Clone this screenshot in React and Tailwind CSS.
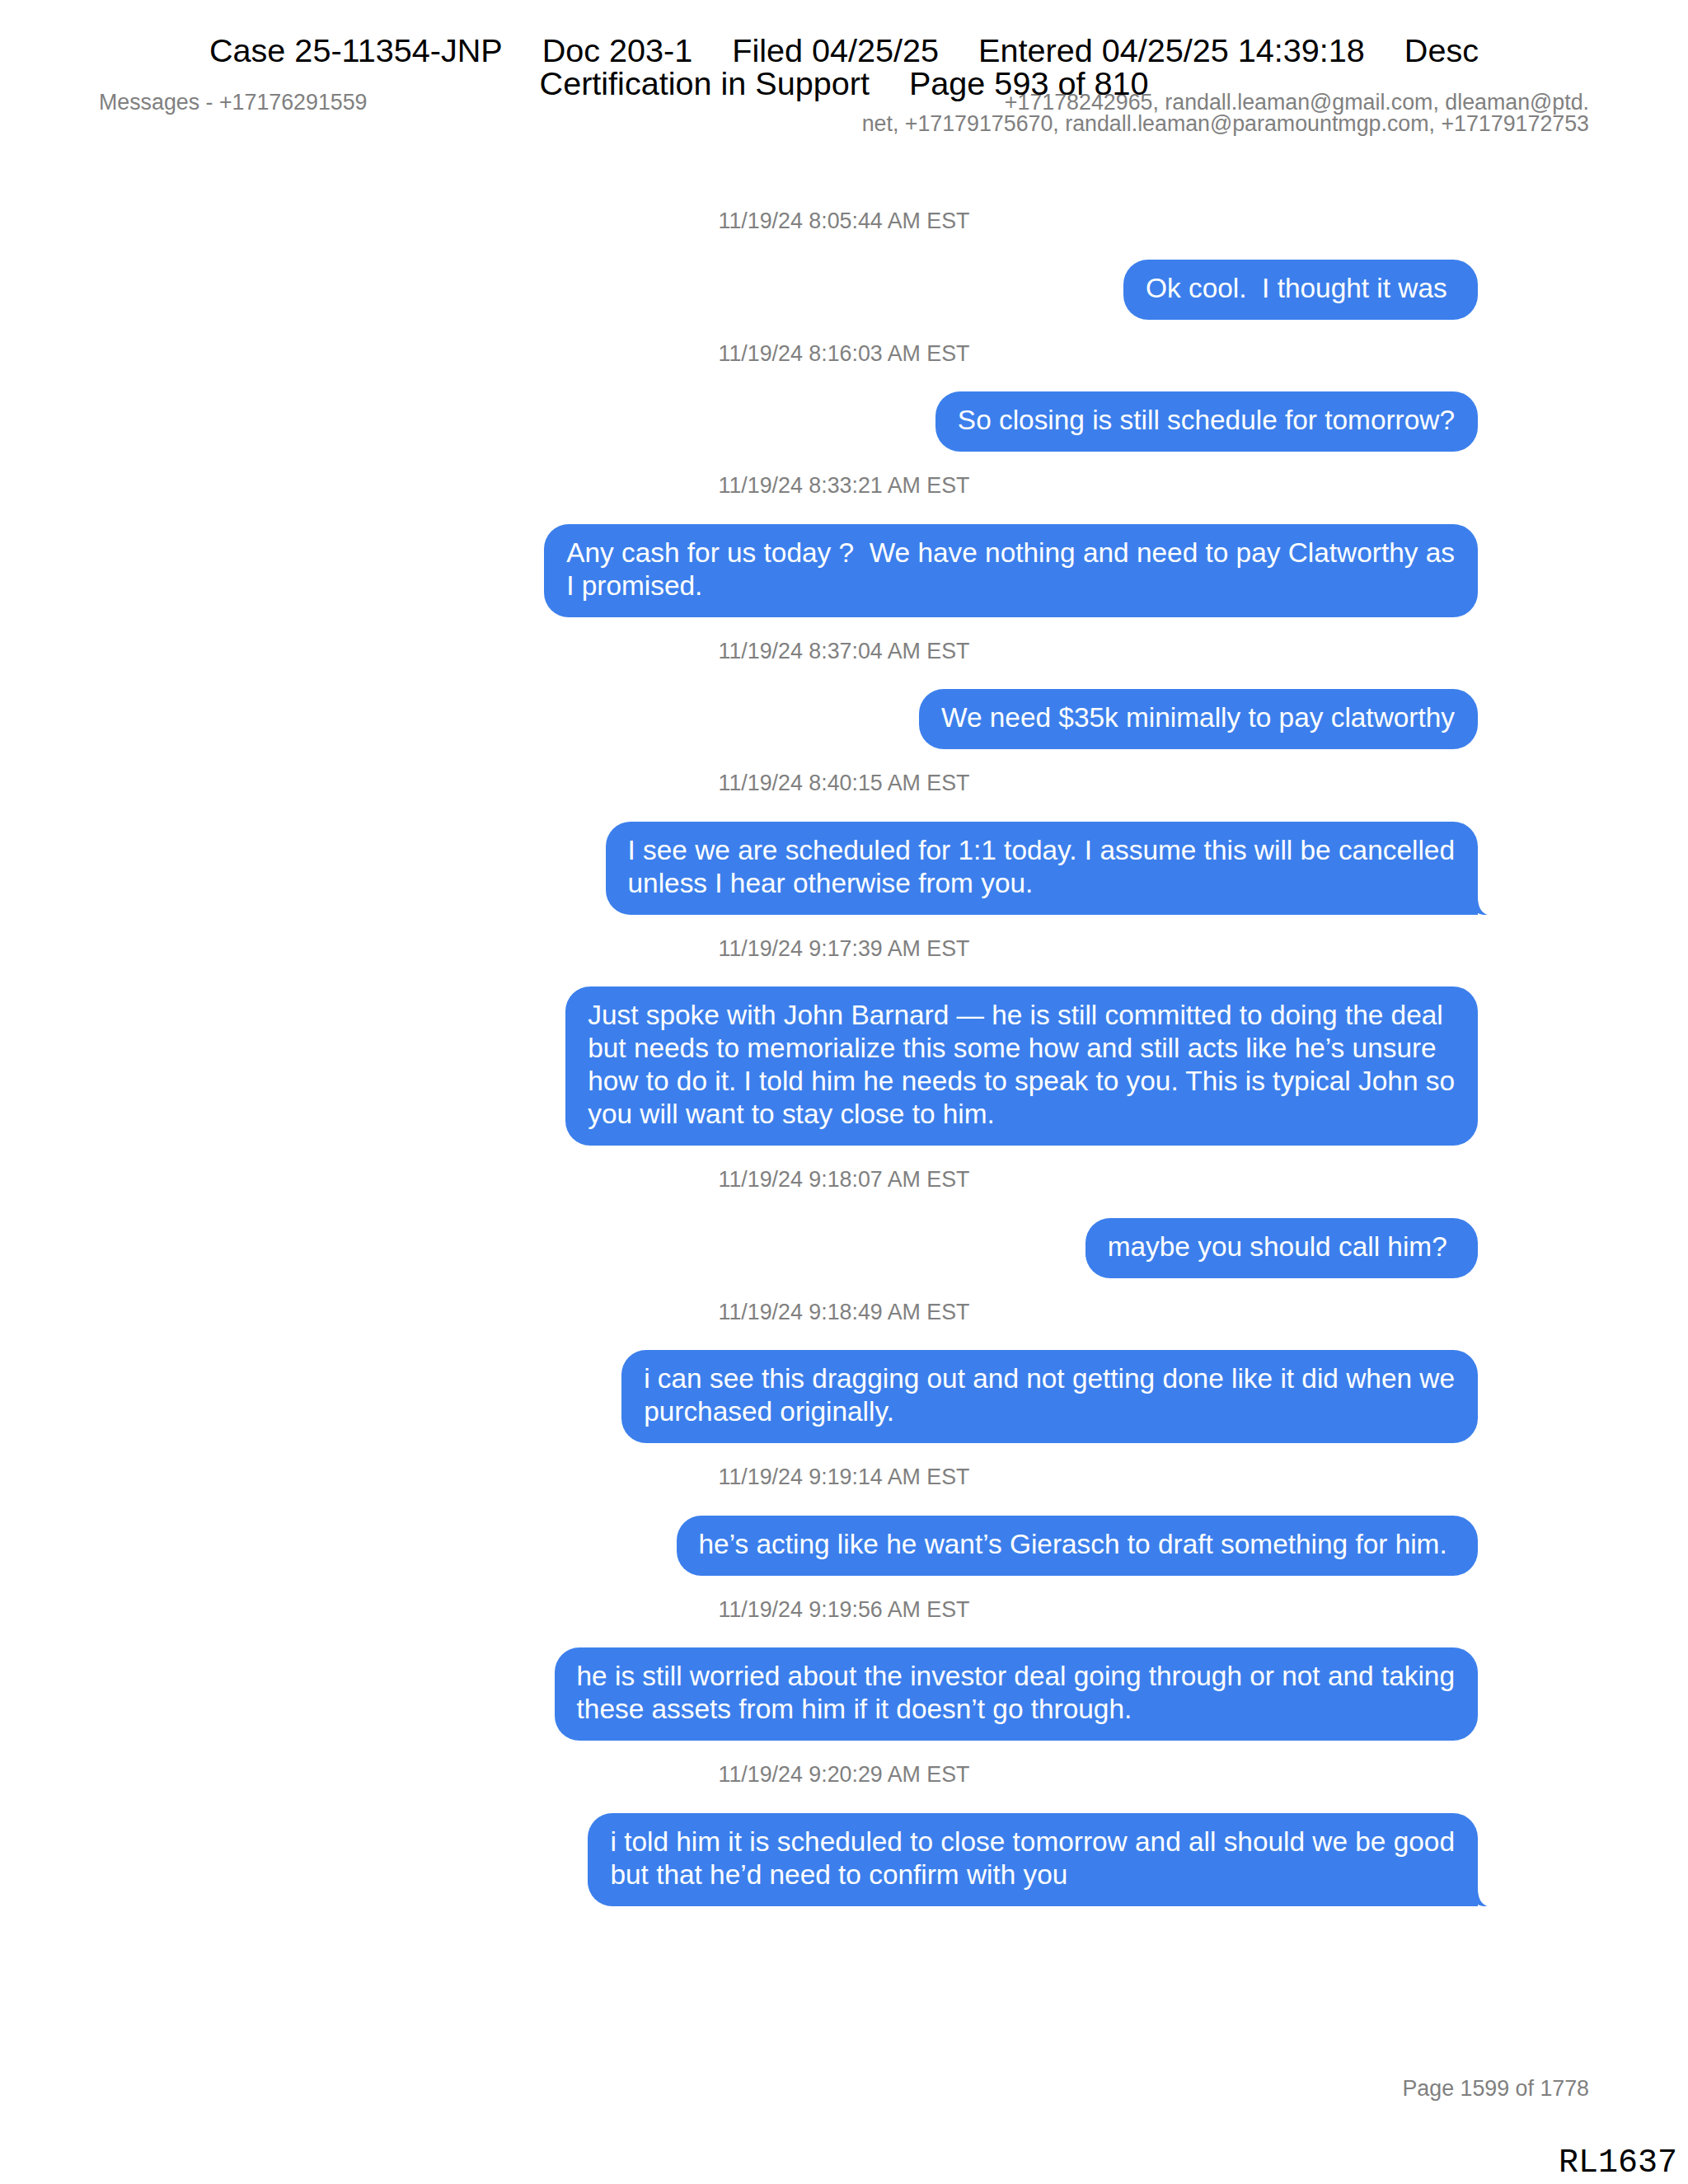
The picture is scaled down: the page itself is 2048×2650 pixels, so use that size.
import React from "react";

const messages = [
  { ts: "11/19/24 8:05:44 AM EST", lines: ["Ok cool.  I thought it was "] },
  { ts: "11/19/24 8:16:03 AM EST", lines: ["So closing is still schedule for tomorrow?"] },
  {
    ts: "11/19/24 8:33:21 AM EST",
    lines: ["Any cash for us today ?  We have nothing and need to pay Clatworthy as", "I promised."],
  },
  { ts: "11/19/24 8:37:04 AM EST", lines: ["We need $35k minimally to pay clatworthy"] },
  {
    ts: "11/19/24 8:40:15 AM EST",
    lines: ["I see we are scheduled for 1:1 today. I assume this will be cancelled", "unless I hear otherwise from you."],
    tail: true,
  },
  {
    ts: "11/19/24 9:17:39 AM EST",
    lines: [
      "Just spoke with John Barnard \u2014 he is still committed to doing the deal",
      "but needs to memorialize this some how and still acts like he\u2019s unsure",
      "how to do it. I told him he needs to speak to you. This is typical John so",
      "you will want to stay close to him.",
    ],
  },
  { ts: "11/19/24 9:18:07 AM EST", lines: ["maybe you should call him? "] },
  {
    ts: "11/19/24 9:18:49 AM EST",
    lines: ["i can see this dragging out and not getting done like it did when we", "purchased originally."],
  },
  { ts: "11/19/24 9:19:14 AM EST", lines: ["he\u2019s acting like he want\u2019s Gierasch to draft something for him. "] },
  {
    ts: "11/19/24 9:19:56 AM EST",
    lines: [
      "he is still worried about the investor deal going through or not and taking",
      "these assets from him if it doesn\u2019t go through.",
    ],
  },
  {
    ts: "11/19/24 9:20:29 AM EST",
    lines: ["i told him it is scheduled to close tomorrow and all should we be good", "but that he\u2019d need to confirm with you"],
    tail: true,
  },
];

function Tail() {
  return (
    <svg
      className="absolute right-[-12px] bottom-0"
      width="24"
      height="30"
      viewBox="0 0 24 30"
    >
      <path
        d="M0 0 H12 V8 C12 20 16 27 23.5 30 C18 30.6 13 29 10 26.5 C7 29 3 30 0 30 Z"
        fill="#3c7fec"
      />
    </svg>
  );
}

function Bubble({ lines, tail }) {
  return (
    <div className="flex justify-end pr-[255px]">
      <div
        className={
          tail
            ? "relative rounded-[30px] rounded-br-none bg-[#3c7fec] pt-[15px] pb-[18px] pl-[27px] pr-[28px] text-[33.4px] leading-[40px] text-white whitespace-pre"
            : "relative rounded-[30px] bg-[#3c7fec] pt-[15px] pb-[18px] pl-[27px] pr-[28px] text-[33.4px] leading-[40px] text-white whitespace-pre"
        }
      >
        {lines.map((l, i) => (
          <div key={i}>{l}</div>
        ))}
        {tail && <Tail />}
      </div>
    </div>
  );
}

export default function App() {
  return (
    <div className="relative flex h-[2650px] w-[2048px] flex-col bg-white font-['Liberation_Sans',Arial,sans-serif]">
      {/* Court filing stamp overlay */}
      <div className="absolute inset-x-0 top-[41px] text-[39.6px] leading-[40px] text-black">
        <div className="flex justify-center gap-[48px] whitespace-pre">
          <span>Case 25-11354-JNP</span>
          <span>Doc 203-1</span>
          <span>Filed 04/25/25</span>
          <span>Entered 04/25/25 14:39:18</span>
          <span>Desc</span>
        </div>
        <div className="flex justify-center gap-[48px] whitespace-pre">
          <span>Certification in Support</span>
          <span>Page 593 of 810</span>
        </div>
      </div>

      {/* Page header */}
      <div className="flex justify-between px-[120px] pt-[111px] text-[26.8px] leading-[26px] text-[#808080]">
        <div>Messages - +17176291559</div>
        <div className="text-right whitespace-pre">
          <div>+17178242965, randall.leaman@gmail.com, dleaman@ptd.</div>
          <div>net, +17179175670, randall.leaman@paramountmgp.com, +17179172753</div>
        </div>
      </div>

      {/* Conversation */}
      <div className="mt-[64px] flex flex-col">
        {messages.map((m, i) => (
          <div key={i} className="flex flex-col">
            <div className="mt-[26px] mb-[31.5px] text-center text-[26.8px] leading-[30px] text-[#808080]">
              {m.ts}
            </div>
            <Bubble lines={m.lines} tail={m.tail} />
          </div>
        ))}
      </div>

      {/* Footer */}
      <div className="mt-auto flex flex-col pb-[5px]">
        <div className="pr-[120px] text-right text-[26.8px] leading-[30px] text-[#808080]">
          Page 1599 of 1778
        </div>
        <div className="mt-[56px] pr-[13px] text-right font-['Liberation_Mono','Courier_New',monospace] text-[40px] leading-[40px] text-black">
          RL1637
        </div>
      </div>
    </div>
  );
}
